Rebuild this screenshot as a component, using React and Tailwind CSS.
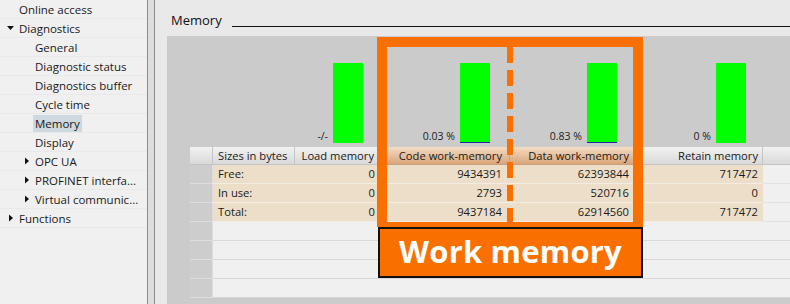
import React from 'react';

const tree = [
  { label: 'Online access', level: 0 },
  { label: 'Diagnostics', level: 0, arrow: 'down' },
  { label: 'General', level: 1 },
  { label: 'Diagnostic status', level: 1 },
  { label: 'Diagnostics buffer', level: 1 },
  { label: 'Cycle time', level: 1 },
  { label: 'Memory', level: 1, selected: true },
  { label: 'Display', level: 1 },
  { label: 'OPC UA', level: 1, arrow: 'right' },
  { label: 'PROFINET interfa...', level: 1, arrow: 'right' },
  { label: 'Virtual communic...', level: 1, arrow: 'right' },
  { label: 'Functions', level: 0, arrow: 'right' },
];

const Arrow = ({ dir }) => (
  <svg width="14" height="10" viewBox="0 0 14 10">
    {dir === 'down' ? (
      <polygon points="2,3 9,3 5.5,7" fill="#111" />
    ) : (
      <polygon points="4,1.5 8,5 4,8.5" fill="#111" />
    )}
  </svg>
);

const Sidebar = () => (
  <div className="w-[147px] shrink-0 bg-[#f0f0f0] text-[11.5px]">
    {tree.map(item => (
      <div
        key={item.label}
        className={`h-[19px] flex items-center border-b border-[#e9e9e9] ${item.level === 0 ? 'pl-[5px]' : 'pl-[21px]'}`}
      >
        <span className="w-[14px] flex items-center">{item.arrow && <Arrow dir={item.arrow} />}</span>
        <span className={`leading-[17px] whitespace-nowrap ${item.selected ? 'bg-[#cdd8e0] -ml-[2px] px-[2px]' : ''}`}>
          {item.label}
        </span>
      </div>
    ))}
  </div>
);

// column widths follow the table below the chart
const bars = [
  { label: '-/-', width: 'w-[83px]', pad: 'pr-[15px]' },
  { label: '0.03 %', width: 'w-[132px]', pad: 'pr-[20px]', line: true },
  { label: '0.83 %', width: 'w-[128px]', pad: 'pr-[21px]', line: true },
  { label: '0 %', width: 'w-[125px]', pad: 'pr-[17px]' },
];

const rows = [
  ['Free:', '0', '9434391', '62393844', '717472'],
  ['In use:', '0', '2793', '520716', '0'],
  ['Total:', '0', '9437184', '62914560', '717472'],
];

const cols = 'grid grid-cols-[23px_82px_83px_132px_128px_125px_1fr]';

const Table = () => (
  <div className="ml-[23px] text-[#1a1a1a] text-[11.2px]">
    <div className={`${cols} h-[18px] leading-[17px]`}>
      <div className="bg-gradient-to-b from-[#f2f2f2] to-[#d9d9d9] border-r border-b border-[#c4c4c4]" />
      <div className="bg-gradient-to-b from-[#f2f2f2] to-[#d9d9d9] border-r border-b border-[#c4c4c4] pl-[5px]">Sizes in bytes</div>
      <div className="bg-gradient-to-b from-[#f2f2f2] to-[#d9d9d9] border-r border-b border-[#c4c4c4] text-right pr-[3px]">Load memory</div>
      <div className="bg-gradient-to-b from-[#f3dcc4] to-[#d9a57a] border-r border-b border-[#c9a07e] text-right pr-[7px]">Code work-memory</div>
      <div className="bg-gradient-to-b from-[#f3dcc4] to-[#d9a57a] border-r border-b border-[#c9a07e] text-right pr-[8px]">Data work-memory</div>
      <div className="bg-gradient-to-b from-[#f2f2f2] to-[#d9d9d9] border-r border-b border-[#c4c4c4] text-right pr-[4px]">Retain memory</div>
      <div className="bg-gradient-to-b from-[#f2f2f2] to-[#d9d9d9] border-b border-[#c4c4c4]" />
    </div>
    {rows.map(r => (
      <div key={r[0]} className={`${cols} h-[19px] leading-[18px]`}>
        <div className="bg-[#cdcdcd] border-r border-b border-[#dedede]" />
        <div className="bg-[#ecdec9] border-b border-[#f3ece2] pl-[5px]">{r[0]}</div>
        <div className="bg-[#ecdec9] border-b border-[#f3ece2] text-right pr-[3px]">{r[1]}</div>
        <div className="bg-[#ecdec9] border-b border-[#f3ece2] text-right pr-[8px]">{r[2]}</div>
        <div className="bg-[#ecdec9] border-b border-[#f3ece2] text-right pr-[9px]">{r[3]}</div>
        <div className="bg-[#ecdec9] border-b border-[#f3ece2] text-right pr-[5px]">{r[4]}</div>
        <div className="bg-[#f0f0f0] border-b border-[#e2e2e2]" />
      </div>
    ))}
    {[0, 1, 2, 3].map(i => (
      <div key={i} className="grid grid-cols-[23px_1fr] h-[19px]">
        <div className="bg-[#cdcdcd] border-r border-b border-[#dedede]" />
        <div className="bg-[#f0f0f0] border-b border-[#d9d9d9]" />
      </div>
    ))}
  </div>
);

const WorkMemoryOverlay = () => (
  <div className="absolute left-[210px] top-[1px] w-[266px] flex flex-col">
    <div className="relative h-[190px] border-[10px] border-b-[5px] border-[#fa7000]">
      <div className="absolute left-[120px] top-0 bottom-0 w-[6px] bg-[repeating-linear-gradient(to_bottom,#fa7000_0_16px,transparent_16px_23px)]" />
    </div>
    <div className="h-[51px] ml-[1px] bg-[#fa7000] border-2 border-[#111] flex items-center justify-center">
      <span className="font-['Open_Sans',sans-serif] font-bold text-[31px] text-white leading-none tracking-[0.2px] -mt-[3px]">
        Work memory
      </span>
    </div>
  </div>
);

export default function App() {
  return (
    <div className="w-[790px] h-[304px] overflow-hidden flex text-[12px] text-[#1a1a1a] font-['Open_Sans',sans-serif]">
      <Sidebar />
      <div className="w-[8px] shrink-0 bg-[#dddddd] border-l border-r border-[#8c8c8c]" />
      <div className="flex-1 bg-[#e9e9e9] pl-[12px] flex flex-col">
        <div className="h-[36px] flex items-start pt-[12px]">
          <span className="ml-[4px] leading-[16px] text-[13px] text-[#111]">Memory</span>
          <div className="flex-1 h-px bg-[#111] mt-[14px] ml-[10px]" />
        </div>
        <div className="relative flex-1 bg-[#cbcbcb]">
          <div className="h-[111px] flex pl-[128px] pb-[4px]">
            {bars.map(b => (
              <div key={b.label} className={`${b.width} ${b.pad} shrink-0 flex items-end justify-end gap-[5px]`}>
                <span className="text-[10.5px] leading-[14px] text-[#222] whitespace-nowrap">{b.label}</span>
                <div className={`w-[30px] h-[80px] bg-[#00ff00] ${b.line ? 'border-b border-[#1a2a9a]' : ''}`} />
              </div>
            ))}
          </div>
          <Table />
          <WorkMemoryOverlay />
        </div>
      </div>
    </div>
  );
}
